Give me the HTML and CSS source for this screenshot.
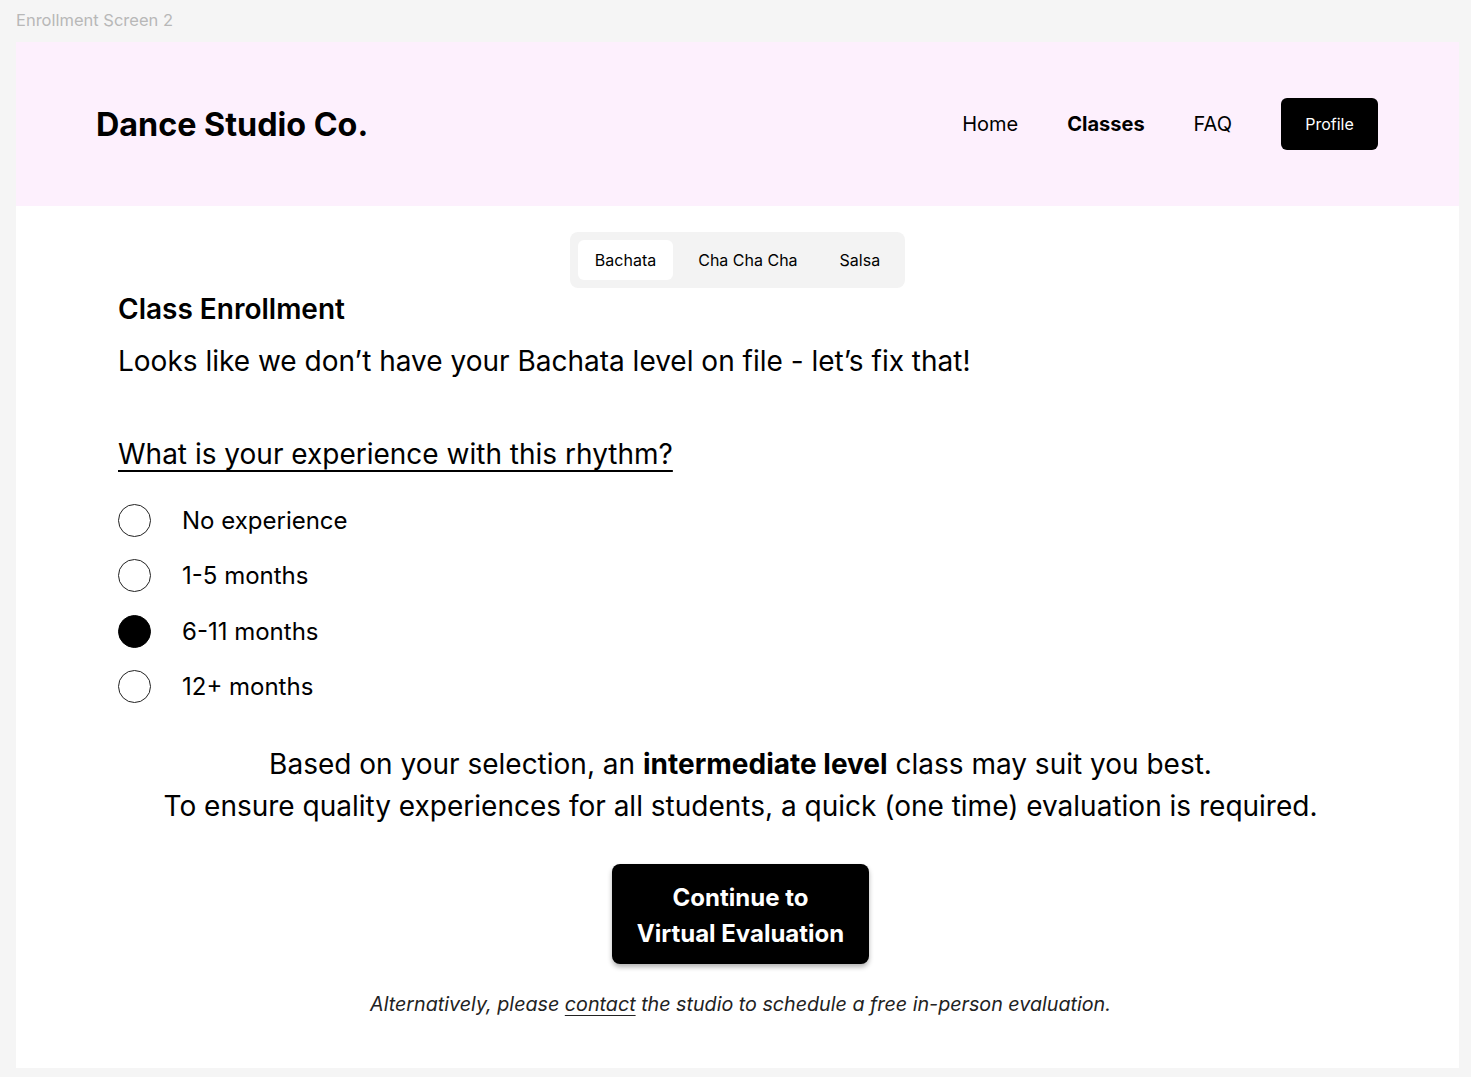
FILE: index.html
```html
<!DOCTYPE html>
<html lang="en">
<head>
<meta charset="utf-8">
<title>Enrollment Screen 2</title>
<link rel="stylesheet" href="styles.css">
</head>
<body>
<div class="label">Enrollment Screen 2</div>
<div class="frame">
  <header class="header">
    <div class="logo">Dance Studio Co.</div>
    <nav class="nav">
      <a class="nav-link">Home</a>
      <a class="nav-link active">Classes</a>
      <a class="nav-link">FAQ</a>
      <a class="profile-btn">Profile</a>
    </nav>
  </header>
  <main class="main">
    <div class="tabs-row">
      <div class="tabs">
        <div class="tab selected">Bachata</div>
        <div class="tab">Cha Cha Cha</div>
        <div class="tab">Salsa</div>
      </div>
    </div>
    <h1 class="title">Class Enrollment</h1>
    <p class="subtitle">Looks like we don’t have your Bachata level on file - let’s fix that!</p>
    <h2 class="question">What is your experience with this rhythm?</h2>
    <ul class="options">
      <li class="option"><span class="radio"></span><span class="opt-text">No experience</span></li>
      <li class="option"><span class="radio"></span><span class="opt-text">1-5 months</span></li>
      <li class="option"><span class="radio checked"></span><span class="opt-text">6-11 months</span></li>
      <li class="option"><span class="radio"></span><span class="opt-text">12+ months</span></li>
    </ul>
    <p class="result">Based on your selection, an <strong>intermediate level</strong> class may suit you best.<br>To ensure quality experiences for all students, a quick (one time) evaluation is required.</p>
    <div class="cta-row">
      <button class="cta">Continue to<br>Virtual Evaluation</button>
    </div>
    <p class="alt">Alternatively, please <a class="contact">contact</a> the studio to schedule a free in-person evaluation.</p>
  </main>
</div>
</body>
</html>
```

FILE: styles.css
```css
* { box-sizing: border-box; }
html, body { margin: 0; padding: 0; }
body {
  background: #f5f5f5;
  font-family: Inter, "Noto Sans", sans-serif;
  color: #000;
  width: 1471px;
  height: 1077px;
  overflow: hidden;
}
.label {
  height: 42px;
  padding: 11px 0 0 16px;
  font-size: 16.5px;
  color: #b8b8b8;
  line-height: 19px;
}
.frame {
  margin-left: 16px;
  width: 1443px;
  height: 1026px;
  background: #fff;
}
.header {
  height: 164px;
  background: #fdf0fd;
  display: flex;
  align-items: center;
  justify-content: space-between;
  padding: 0 81px 0 80px;
}
.logo {
  font-size: 32.3px;
  font-weight: 700;
}
.nav {
  display: flex;
  align-items: center;
  gap: 49px;
}
.nav-link {
  font-size: 20px;
  color: #000;
}
.nav-link.active { font-weight: 700; }
.profile-btn {
  width: 97px;
  height: 52px;
  background: #000;
  color: #fff;
  border-radius: 6px;
  display: flex;
  align-items: center;
  justify-content: center;
  font-size: 16px;
}
.main {
  padding: 26px 96px 0 102px;
}
.tabs-row {
  display: flex;
  justify-content: center;
  margin-right: 6px;
}
.tabs {
  display: flex;
  gap: 8px;
  padding: 8px;
  background: #f3f3f3;
  border-radius: 8px;
}
.tab {
  height: 40px;
  padding: 0 17px;
  display: flex;
  align-items: center;
  font-size: 16px;
  border-radius: 6px;
}
.tab.selected { background: #fff; }
.title {
  margin: 4px 0 0;
  font-size: 28px;
  font-weight: 600;
  line-height: 34px;
}
.subtitle {
  margin: 18px 0 0;
  font-size: 28px;
  line-height: 34px;
}
.question {
  margin: 59px 0 0;
  font-size: 28px;
  font-weight: 400;
  line-height: 34px;
  text-decoration: underline;
  text-decoration-thickness: 2px;
  text-underline-offset: 6px;
}
.options {
  list-style: none;
  margin: 33px 0 0;
  padding: 0;
  display: flex;
  flex-direction: column;
  gap: 22.4px;
}
.option {
  display: flex;
  align-items: center;
  height: 33px;
}
.radio {
  width: 33px;
  height: 33px;
  border: 1.5px solid #222;
  border-radius: 50%;
  margin-right: 31px;
  flex: none;
}
.radio.checked { background: #000; border-color: #000; }
.opt-text { font-size: 24px; }
.result {
  margin: 40px 0 0;
  text-align: center;
  font-size: 28px;
  line-height: 42px;
}
.result strong { font-weight: 700; }
.cta-row {
  display: flex;
  justify-content: center;
  margin-top: 37px;
}
.cta {
  width: 257px;
  height: 100px;
  padding: 3px 0 0;
  background: #000;
  color: #fff;
  border: none;
  border-radius: 8px;
  font-family: inherit;
  font-size: 24px;
  font-weight: 700;
  line-height: 36px;
  box-shadow: 0 3px 5px rgba(0,0,0,0.3);
}
.alt {
  margin: 28px 0 0;
  text-align: center;
  font-size: 19.7px;
  font-style: italic;
  color: #222;
}
.contact {
  text-decoration: underline;
  text-underline-offset: 4px;
}
```
